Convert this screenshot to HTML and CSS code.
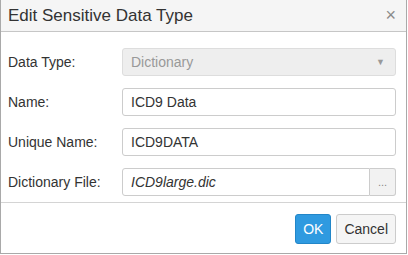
FILE: index.html
```html
<!DOCTYPE html>
<html lang="en">
  <head>
    <meta charset="UTF-8" />
    <title>Edit Sensitive Data Type</title>
    <link rel="stylesheet" href="styles.css">
  </head>
  <body>
    <div class="dialog">
      <div class="dialog-header">
        <div class="dialog-title">Edit Sensitive Data Type</div>
        <div class="close">&times;</div>
      </div>
      <div class="dialog-body">
        <div class="row">
          <label>Data Type:</label>
          <div class="field select disabled">
            <span>Dictionary</span>
            <span class="caret">&#9660;</span>
          </div>
        </div>
        <div class="row">
          <label>Name:</label>
          <div class="field">ICD9 Data</div>
        </div>
        <div class="row">
          <label>Unique Name:</label>
          <div class="field">ICD9DATA</div>
        </div>
        <div class="row">
          <label>Dictionary File:</label>
          <div class="file-group">
            <div class="field file">ICD9large.dic</div>
            <div class="browse">...</div>
          </div>
        </div>
      </div>
      <div class="dialog-footer">
        <div class="btn btn-primary">OK</div>
        <div class="btn">Cancel</div>
      </div>
    </div>
  </body>
</html>
```

FILE: styles.css
```css
* {
  padding: 0;
  margin: 0;
  box-sizing: border-box;
  font-family: 'Liberation Sans', Arial, sans-serif;
}
body {
  background: #fff;
}
.dialog {
  width: 407px;
  height: 254px;
  border: 1px solid #a9a9a9;
  border-top: none;
  background: #fff;
  color: #333;
}
.dialog-header {
  height: 32px;
  background: #f5f5f5;
  border-bottom: 1px solid #c6c6c6;
  display: flex;
  align-items: center;
  justify-content: space-between;
  padding: 0 8px 0 7px;
}
.dialog-title {
  font-size: 17px;
  color: #333;
}
.close {
  font-size: 18px;
  color: #8a8a8a;
  padding-right: 2px;
}
.dialog-body {
  padding: 16px 10px 6px 7px;
  display: flex;
  flex-direction: column;
  gap: 12px;
  border-bottom: 1px solid #d4d4d4;
}
.row {
  display: flex;
  align-items: center;
  height: 28px;
}
label {
  width: 114px;
  font-size: 14px;
  color: #333;
}
.field {
  flex: 1;
  height: 28px;
  border: 1px solid #ccc;
  border-radius: 3px;
  padding: 0 8px;
  display: flex;
  align-items: center;
  font-size: 14px;
  color: #333;
}
.select {
  justify-content: space-between;
}
.disabled {
  background: #eee;
  border-color: #ddd;
  color: #999;
}
.caret {
  font-size: 9px;
  color: #999;
  padding-right: 2px;
}
.file-group {
  flex: 1;
  display: flex;
}
.file {
  font-style: italic;
  border-radius: 3px 0 0 3px;
}
.browse {
  width: 26px;
  height: 28px;
  border: 1px solid #ccc;
  border-left: none;
  border-radius: 0 3px 3px 0;
  background: #f2f2f2;
  font-size: 11px;
  color: #888;
  display: flex;
  align-items: flex-end;
  justify-content: center;
  padding-bottom: 7px;
}
.dialog-footer {
  display: flex;
  justify-content: flex-end;
  gap: 5px;
  padding: 11px 10px 0 0;
}
.btn {
  height: 30px;
  padding: 0 7px;
  border: 1px solid #ccc;
  border-radius: 3px;
  background: #f5f5f5;
  font-size: 14px;
  color: #333;
  display: flex;
  align-items: center;
}
.btn-primary {
  background: #2f9ae0;
  border-color: #2286c8;
  color: #fff;
}
```
